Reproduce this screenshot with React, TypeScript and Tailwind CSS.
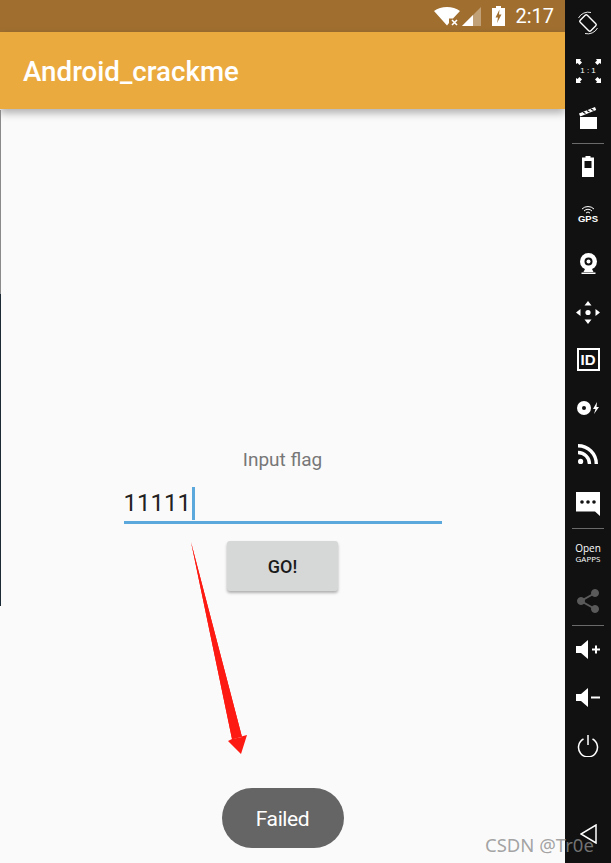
import React from 'react';

const Separator = ({ className }: { className: string }) => (
  <div className={`h-px w-[32px] bg-[#6a6a6a] ${className}`} />
);

function StatusBar() {
  return (
    <div className="flex h-[32px] items-center justify-end bg-[#a06f30] pr-[11px] text-white">
      <svg viewBox="0 0 26 19" className="h-[19px] w-[26px]">
        <path d="M0 4 C7 -1.3 19 -1.3 26 4 L19 11.5 L15 11.5 L15 16 L13 18.5 Z" fill="#fff" />
        <path d="M18 13 L23 18 M23 13 L18 18" stroke="#fff" strokeWidth="1.6" />
      </svg>
      <svg viewBox="0 0 19 19" className="ml-[2px] h-[19px] w-[19px]">
        <path d="M0 19 L19 0 V19 Z" fill="#fff" fillOpacity="0.35" />
        <path d="M0 19 L11 8 V19 Z" fill="#fff" />
      </svg>
      <svg viewBox="0 0 13 20" className="ml-[11px] h-[20px] w-[13px]">
        <path d="M4 0 H9 V2 H13 V20 H0 V2 H4 Z M7.5 3.5 L3.5 11.5 H6 L5 17 L9.5 8.5 H7 Z" fill="#fff" fillRule="evenodd" />
      </svg>
      <span className="ml-[10px] font-['Roboto',sans-serif] text-[20px] leading-none">2:17</span>
    </div>
  );
}

function Sidebar() {
  return (
    <div className="flex w-[46px] shrink-0 flex-col items-center bg-[#111111] text-white">
      {/* rotate */}
      <svg viewBox="0 0 24 24" className="mt-[11px] h-[24px] w-[24px]" fill="none" stroke="#fff">
        <rect x="7" y="4.5" width="10" height="15" rx="1.5" transform="rotate(-45 12 12)" strokeWidth="1.4" />
        <path d="M2.5 7 A11 11 0 0 1 15 1.5 M21.5 17 A11 11 0 0 1 9 22.5" strokeWidth="0.9" />
      </svg>
      {/* 1:1 */}
      <div className="relative mt-[24px] flex h-[24px] w-[25px] items-center justify-center">
        <svg viewBox="0 0 25 24" className="absolute inset-0 h-[24px] w-[25px]" fill="#fff">
          <path d="M0 0 H5 L4 1.5 L6 3.5 L3.5 6 L1.5 4 L0 5 Z" />
          <path d="M25 0 H20 L21 1.5 L19 3.5 L21.5 6 L23.5 4 L25 5 Z" />
          <path d="M0 24 H5 L4 22.5 L6 20.5 L3.5 18 L1.5 20 L0 19 Z" />
          <path d="M25 24 H20 L21 22.5 L19 20.5 L21.5 18 L23.5 20 L25 19 Z" />
        </svg>
        <span className="font-['Liberation_Sans',sans-serif] text-[8px] leading-none">1 : 1</span>
      </div>
      {/* clapper */}
      <svg viewBox="0 0 18 22" className="mt-[24px] h-[22px] w-[18px]" fill="#fff">
        <path d="M1 10 H18 V22 H1 Z" />
        <path d="M0 6.5 L16 0 L17.2 3 L1.2 9.5 Z" />
        <path d="M4 5 L6.5 6.5 M8 3.5 L10.5 5 M12 2 L14.5 3.5" stroke="#111" strokeWidth="1.2" />
      </svg>
      <Separator className="mt-[14px]" />
      {/* battery */}
      <svg viewBox="0 0 12 21" className="mt-[12px] h-[21px] w-[12px]" fill="#fff">
        <path d="M3.5 0 H8.5 V1.5 H12 V21 H0 V1.5 H3.5 Z M2.5 5 V12 H9.5 V5 Z" fillRule="evenodd" />
      </svg>
      {/* gps */}
      <div className="mt-[29px] flex h-[17px] flex-col items-center">
        <svg viewBox="0 0 14 8" className="h-[8px] w-[14px]" fill="none" stroke="#fff" strokeWidth="1">
          <path d="M1 3 A8.5 8.5 0 0 1 13 3 M3 5 A5.5 5.5 0 0 1 11 5 M5 7 A2.8 2.8 0 0 1 9 7" />
        </svg>
        <span className="font-['Liberation_Sans',sans-serif] text-[9.5px] font-bold leading-[9px]">GPS</span>
      </div>
      {/* webcam */}
      <svg viewBox="0 0 19 21" className="mt-[30px] h-[21px] w-[19px]">
        <circle cx="9.5" cy="8.5" r="8.5" fill="#fff" />
        <circle cx="9.5" cy="8.5" r="4" fill="#111" />
        <circle cx="9.5" cy="8.5" r="2" fill="#fff" />
        <path d="M6 16 H13 L14.5 19 H4.5 Z M2.5 19.5 H16.5 V21 H2.5 Z" fill="#fff" />
      </svg>
      {/* dpad */}
      <svg viewBox="0 0 24 23" className="mt-[27px] h-[23px] w-[24px]" fill="#fff">
        <circle cx="12" cy="11.5" r="2.6" />
        <path d="M12 0 L15.5 4.5 H8.5 Z M12 23 L15.5 18.5 H8.5 Z M0 11.5 L4.5 8 V15 Z M24 11.5 L19.5 8 V15 Z" />
      </svg>
      {/* id */}
      <div className="mt-[24px] flex h-[23px] w-[23px] items-center justify-center border-[2px] border-white font-['Liberation_Sans',sans-serif] text-[15px] font-bold leading-none">
        ID
      </div>
      {/* sd card */}
      <svg viewBox="0 0 22 14" className="mt-[30px] h-[14px] w-[22px]">
        <circle cx="7" cy="7" r="7" fill="#fff" />
        <circle cx="7" cy="7" r="2" fill="#111" />
        <path d="M20 1 L16 8 H18.5 L17 13 L22 6 H19.5 Z" fill="#fff" />
      </svg>
      {/* rss */}
      <svg viewBox="0 0 20 20" className="mt-[29px] h-[20px] w-[20px]" fill="none" stroke="#fff" strokeWidth="3.4">
        <circle cx="2.6" cy="17.4" r="2.6" fill="#fff" stroke="none" />
        <path d="M0 8.5 A11.5 11.5 0 0 1 11.5 20" />
        <path d="M0 1.7 A18.3 18.3 0 0 1 18.3 20" />
      </svg>
      {/* sms */}
      <svg viewBox="0 0 24 24" className="mt-[28px] h-[24px] w-[24px]">
        <path d="M0 0 H24 V24 L19 19.5 H0 Z" fill="#fff" />
        <circle cx="6" cy="10" r="1.8" fill="#111" />
        <circle cx="12" cy="10" r="1.8" fill="#111" />
        <circle cx="18" cy="10" r="1.8" fill="#111" />
      </svg>
      <Separator className="mt-[12px]" />
      {/* open gapps */}
      <div className="mt-[14px] flex h-[20px] flex-col items-center font-['Open_Sans',sans-serif] leading-none">
        <span className="text-[10px] font-medium leading-[11px]">Open</span>
        <span className="text-[8px] leading-[9px]">GAPPS</span>
      </div>
      {/* share */}
      <svg viewBox="0 0 22 24" className="mt-[26px] h-[24px] w-[22px]" fill="#5a5a5a" stroke="#5a5a5a">
        <circle cx="18" cy="4" r="3.5" />
        <circle cx="4" cy="12" r="3.5" />
        <circle cx="18" cy="20" r="3.5" />
        <path d="M18 4 L4 12 L18 20" fill="none" strokeWidth="2" />
      </svg>
      <Separator className="mt-[12px]" />
      {/* volume up */}
      <svg viewBox="0 0 24 19" className="mt-[14px] h-[19px] w-[24px]" fill="#fff">
        <path d="M0 6 H5 L12 0 V19 L5 13 H0 Z" />
        <path d="M16 8.5 H19 V5.5 H21 V8.5 H24 V10.5 H21 V13.5 H19 V10.5 H16 Z" />
      </svg>
      {/* volume down */}
      <svg viewBox="0 0 24 19" className="mt-[29px] h-[19px] w-[24px]" fill="#fff">
        <path d="M0 6 H5 L12 0 V19 L5 13 H0 Z" />
        <path d="M15 8.5 H24 V10.5 H15 Z" />
      </svg>
      {/* power */}
      <svg viewBox="0 0 22 22" className="mt-[28px] h-[22px] w-[22px]" fill="none" stroke="#fff" strokeWidth="1.5">
        <path d="M11 0 V10" />
        <path d="M6.5 4 A9.5 9.5 0 1 0 15.5 4" />
      </svg>
      {/* back */}
      <svg viewBox="0 0 17 20" className="mt-[67px] h-[20px] w-[17px]" fill="none" stroke="#fff" strokeWidth="1.5">
        <path d="M16 1 V19 L1 10 Z" />
      </svg>
    </div>
  );
}

export default function App() {
  return (
    <div className="relative flex h-[863px] w-[611px] overflow-hidden bg-[#fafafa] font-['Roboto',sans-serif]">
      <div className="flex w-[565px] shrink-0 flex-col">
        <StatusBar />
        <div className="flex h-[77px] items-center bg-[#eaaa3e] pl-[23px] pt-[2px] text-[27.7px] font-medium text-white shadow-[0_4px_8px_rgba(0,0,0,0.3)]">
          Android_crackme
        </div>
        <div className="flex flex-col items-center pt-[340px]">
          <div className="h-[22px] text-[19px] leading-[22px] text-[#777777]">Input flag</div>
          <div className="mt-[14px] flex h-[39px] w-[318px] items-center border-b-[3px] border-[#5aa8dc] text-[24px] text-[#222222]">
            11111
            <span className="ml-[1px] h-[33px] w-[3px] shrink-0 bg-[#5aa8dc]" />
          </div>
          <button className="mt-[17px] h-[50px] w-[111px] rounded-[3px] bg-[#d6d7d7] text-[18px] font-medium text-[#1a1a1a] shadow-[0_2px_3px_rgba(0,0,0,0.3)]">
            GO!
          </button>
          <div className="mt-[197px] flex h-[60px] w-[122px] items-center justify-center rounded-[30px] bg-[#656565] pt-[3px] text-[21px] tracking-[-0.4px] text-white">
            Failed
          </div>
        </div>
      </div>
      <Sidebar />
      {/* window edge showing at the far left of the capture */}
      <div className="absolute left-0 top-[110px] h-[184px] w-px bg-[#8a8a8a]" />
      <div className="absolute left-0 top-[294px] h-[312px] w-px bg-[#1b2a35]" />
      {/* annotation arrow drawn over the screenshot */}
      <svg viewBox="0 0 70 220" className="absolute left-[185px] top-[538px] h-[220px] w-[70px]">
        <path d="M6 4 L47 201 L62 197 L56 216 L43 203 L47 201 L57 199 Z" fill="#fd1a12" />
        <path d="M6 4 L47 201 L57 199 Z" fill="#fd1a12" />
      </svg>
      <div className="absolute left-[485px] top-[832px] whitespace-nowrap font-['Noto_Sans',sans-serif] text-[18.5px] leading-[26px] text-[#8c8c8c]/80">
        CSDN @Tr0e
      </div>
    </div>
  );
}
